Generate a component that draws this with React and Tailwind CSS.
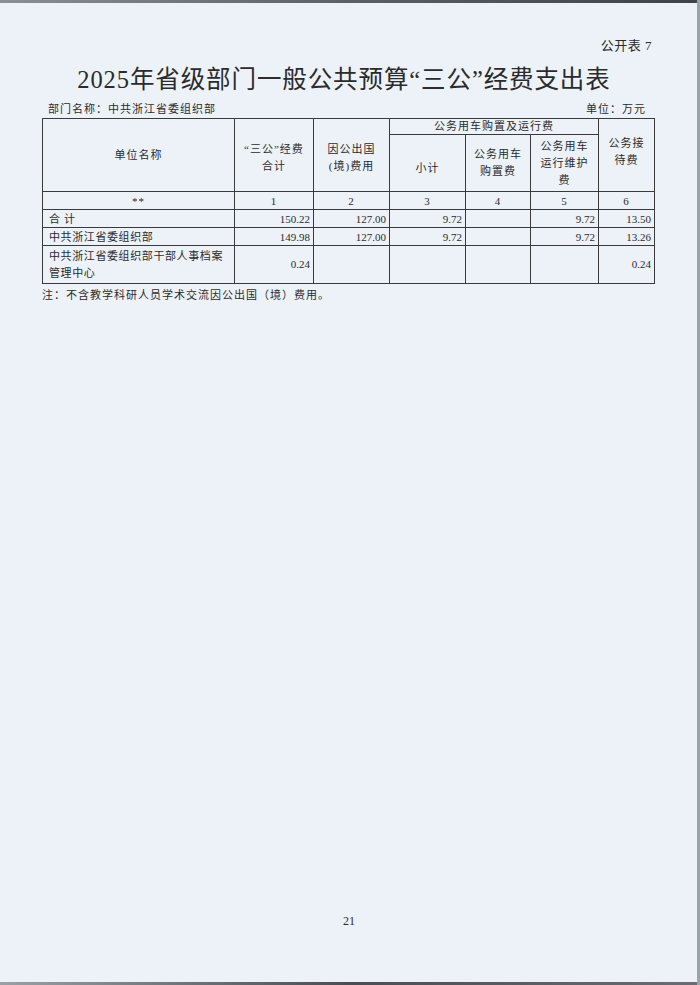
import React from 'react';

const cjk = { fontFamily: '"Liberation Serif", "Noto Sans CJK SC", serif' };

const rows = [
  { name: '合计', spaced: true, total: '150.22', abroad: '127.00', sub: '9.72', buy: '', run: '9.72', rec: '13.50' },
  { name: '中共浙江省委组织部', total: '149.98', abroad: '127.00', sub: '9.72', buy: '', run: '9.72', rec: '13.26' },
  { name: '中共浙江省委组织部干部人事档案管理中心', total: '0.24', abroad: '', sub: '', buy: '', run: '', rec: '0.24', tall: true },
];

const cell = 'border border-[#3a3a3a] p-0';

const App = () => {
  return (
    <div
      className="relative w-[700px] h-[985px] bg-[#edf2f9] text-[#2b2b2b] overflow-hidden"
      style={cjk}
    >
      {/* scan edges */}
      <div className="absolute top-0 left-0 w-full h-[3px] bg-gradient-to-r from-[#8a8f96] via-[#5c6066] to-[#3f4348]" />
      <div className="absolute bottom-0 left-0 w-full h-[3px] bg-gradient-to-r from-[#9aa0a6] via-[#4a4e53] to-[#6a6e73]" />
      <div className="absolute top-0 right-0 w-[3px] h-full bg-[#9da3ab]" />

      <div className="flex flex-col pt-[38px]">
        <div className="flex justify-end pr-[48px] text-[13px] leading-[16px] tracking-[0.5px]">公开表 7</div>

        <h1 className="mt-[11px] text-center text-[24.5px] leading-[30px] tracking-[0.9px] pr-[12px]">
          2025年省级部门一般公共预算“三公”经费支出表
        </h1>

        <div className="mt-[7px] flex justify-between pl-[48px] pr-[54px] text-[11px] leading-[14px] tracking-[1px]">
          <span>部门名称：中共浙江省委组织部</span>
          <span>单位：万元</span>
        </div>

        <table className="ml-[42px] mt-[2px] w-[612px] table-fixed border-collapse text-[11px] tracking-[1px]">
          <colgroup>
            <col className="w-[192px]" />
            <col className="w-[79px]" />
            <col className="w-[76px]" />
            <col className="w-[76px]" />
            <col className="w-[65px]" />
            <col className="w-[68px]" />
            <col className="w-[56px]" />
          </colgroup>
          <thead>
            <tr className="h-[16px]">
              <th rowSpan={2} className={`${cell} font-normal text-center align-middle`}>单位名称</th>
              <th rowSpan={2} className={`${cell} font-normal text-center align-middle leading-[17px] pt-[6px]`}>
                “三公”经费<br />合计
              </th>
              <th rowSpan={2} className={`${cell} font-normal text-center align-middle leading-[17px] pt-[6px]`}>
                因公出国<br />(境)费用
              </th>
              <th colSpan={3} className={`${cell} font-normal text-center leading-[15px]`}>公务用车购置及运行费</th>
              <th rowSpan={2} className={`${cell} font-normal text-center align-middle leading-[17px] pb-[6px]`}>
                公务接<br />待费
              </th>
            </tr>
            <tr className="h-[57px]">
              <th className={`${cell} font-normal text-center align-middle pt-[10px]`}>小计</th>
              <th className={`${cell} font-normal text-center align-middle leading-[17px]`}>
                公务用车<br />购置费
              </th>
              <th className={`${cell} font-normal text-center align-middle leading-[17px]`}>
                公务用车<br />运行维护<br />费
              </th>
            </tr>
          </thead>
          <tbody>
            <tr className="h-[18px] text-center leading-[16px]">
              <td className={cell}>**</td>
              <td className={cell}>1</td>
              <td className={cell}>2</td>
              <td className={cell}>3</td>
              <td className={cell}>4</td>
              <td className={cell}>5</td>
              <td className={cell}>6</td>
            </tr>
            {rows.map((r, i) => (
              <tr key={i} className={r.tall ? 'h-[38px] leading-[17px]' : 'h-[18px] leading-[16px]'}>
                <td className={`${cell} pl-[6px] pr-[2px] text-left ${r.spaced ? 'tracking-[4px]' : 'tracking-[0.6px]'}`}>{r.name}</td>
                <td className={`${cell} pr-[3px] text-right tracking-normal`}>{r.total}</td>
                <td className={`${cell} pr-[3px] text-right tracking-normal`}>{r.abroad}</td>
                <td className={`${cell} pr-[3px] text-right tracking-normal`}>{r.sub}</td>
                <td className={`${cell} pr-[3px] text-right tracking-normal`}>{r.buy}</td>
                <td className={`${cell} pr-[3px] text-right tracking-normal`}>{r.run}</td>
                <td className={`${cell} pr-[3px] text-right tracking-normal`}>{r.rec}</td>
              </tr>
            ))}
          </tbody>
        </table>

        <p className="ml-[42px] mt-[4px] text-[11px] leading-[14px] tracking-[1px]">
          注：不含教学科研人员学术交流因公出国（境）费用。
        </p>

        <div className="mt-[612px] pl-[343px] text-[12px] leading-[14px]">21</div>
      </div>
    </div>
  );
};

export default App;
